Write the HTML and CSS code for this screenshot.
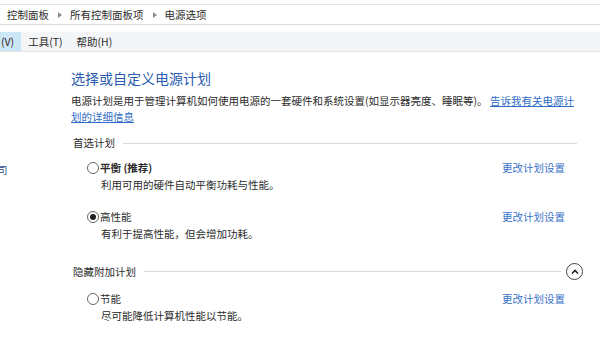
FILE: index.html
```html
<!DOCTYPE html>
<html lang="zh-CN">
<head>
    <meta charset="UTF-8">
    <title>电源选项</title>
    <link rel="stylesheet" href="styles.css">
</head>
<body>
    <!-- Address bar -->
    <div class="address-bar">
        <span class="crumb">控制面板</span>
        <svg class="crumb-arrow" width="4" height="6" viewBox="0 0 4 6"><path d="M0 0 L4 3 L0 6 Z" fill="#8a8a8a"/></svg>
        <span class="crumb">所有控制面板项</span>
        <svg class="crumb-arrow" width="4" height="6" viewBox="0 0 4 6"><path d="M0 0 L4 3 L0 6 Z" fill="#8a8a8a"/></svg>
        <span class="crumb">电源选项</span>
    </div>

    <!-- Menu bar -->
    <div class="menu-bar">
        <span class="menu-item menu-active">(V)</span>
        <span class="menu-item">工具(T)</span>
        <span class="menu-item">帮助(H)</span>
    </div>

    <div class="main">
        <div class="sidebar">
            <span class="side-link">司</span>
        </div>

        <div class="content">
            <h1 class="page-title">选择或自定义电源计划</h1>
            <p class="intro">电源计划是用于管理计算机如何使用电源的一套硬件和系统设置(如显示器亮度、睡眠等)。 <a class="info-link">告诉我有关电源计<br>划的详细信息</a></p>

            <div class="group-header">
                <span class="group-label">首选计划</span>
                <span class="group-line"></span>
            </div>

            <div class="plan plan-first">
                <span class="radio"></span>
                <span class="plan-name plan-bold">平衡 (推荐)</span>
                <a class="plan-link">更改计划设置</a>
                <span class="plan-desc">利用可用的硬件自动平衡功耗与性能。</span>
            </div>

            <div class="plan">
                <span class="radio radio-checked"></span>
                <span class="plan-name">高性能</span>
                <a class="plan-link">更改计划设置</a>
                <span class="plan-desc">有利于提高性能，但会增加功耗。</span>
            </div>

            <div class="group-header group-hidden">
                <span class="group-label">隐藏附加计划</span>
                <span class="group-line"></span>
                <span class="collapse-btn">
                    <svg width="8" height="6" viewBox="0 0 8 6"><path d="M1 4.5 L4 1.5 L7 4.5" fill="none" stroke="#222" stroke-width="1.6"/></svg>
                </span>
            </div>

            <div class="plan plan-extra">
                <span class="radio"></span>
                <span class="plan-name">节能</span>
                <a class="plan-link">更改计划设置</a>
                <span class="plan-desc">尽可能降低计算机性能以节能。</span>
            </div>
        </div>
    </div>
</body>
</html>
```

FILE: styles.css
```css
/* Base */
:root {
    --text: #2b2b2b;
    --title: #2a5cb0;
    --link: #2f6cc6;
    --line: #dadada;
    --font: 'Noto Sans CJK SC', 'Noto Sans', sans-serif;
}

* {
    margin: 0;
    padding: 0;
    box-sizing: border-box;
}

body {
    width: 600px;
    height: 338px;
    overflow: hidden;
    background: #fff;
    font-family: var(--font);
    font-size: 10.5px;
    color: var(--text);
}

/* Address bar */
.address-bar {
    margin-top: 4px;
    height: 21px;
    border-top: 1px solid #e2e2e2;
    border-bottom: 1px solid #dcdcdc;
    display: flex;
    align-items: center;
    padding-left: 7px;
    line-height: 19px;
}

.crumb-arrow {
    margin: 0 8px 0 9px;
}

/* Menu bar */
.menu-bar {
    margin-top: 7px;
    height: 20px;
    background: #f4f5f7;
    border-bottom: 1px solid #e4e4e4;
    display: flex;
    align-items: stretch;
    line-height: 19px;
}

.menu-item {
    padding: 0 7px;
}

.menu-active {
    background: #cde6f7;
    padding: 0 7px 0 1px;
}

/* Main area */
.main {
    display: flex;
}

.sidebar {
    width: 71px;
    padding-top: 110px;
}

.side-link {
    display: inline-block;
    margin-left: -3px;
    color: #2b4a8a;
    line-height: 16px;
}

.content {
    width: 506px;
    padding-top: 16px;
}

.page-title {
    font-size: 14px;
    font-weight: normal;
    color: var(--title);
    line-height: 20px;
}

.intro {
    margin-top: 5px;
    line-height: 16px;
}

.info-link {
    color: var(--link);
    text-decoration: underline;
}

/* Group headers */
.group-header {
    display: flex;
    align-items: center;
    margin-top: 10px;
    padding-left: 2px;
    line-height: 16px;
}

.group-line {
    flex: 1;
    height: 1px;
    background: var(--line);
    margin-left: 8px;
}

.group-hidden {
    margin-top: 21px;
}

.collapse-btn {
    width: 17px;
    height: 17px;
    border: 1px solid #444;
    border-radius: 50%;
    display: flex;
    align-items: center;
    justify-content: center;
    margin: 0 -6px 0 5px;
    background: #fff;
}

/* Plans */
.plan {
    display: grid;
    grid-template-columns: 13px 1fr auto;
    align-items: center;
    padding-left: 16px;
    padding-right: 12px;
    margin-top: 16px;
    line-height: 16px;
}

.plan-first {
    margin-top: 9px;
}

.plan-extra {
    margin-top: 11px;
}

.radio {
    width: 12px;
    height: 12px;
    border: 1px solid #666;
    border-radius: 50%;
    display: flex;
    align-items: center;
    justify-content: center;
}

.radio-checked::after {
    content: '';
    width: 6px;
    height: 6px;
    border-radius: 50%;
    background: #222;
}

.plan-bold {
    font-weight: bold;
}

.plan-link {
    color: #3a72c9;
}

.plan-desc {
    grid-column: 2 / 4;
    margin: 1px 0 0 1px;
}
```
